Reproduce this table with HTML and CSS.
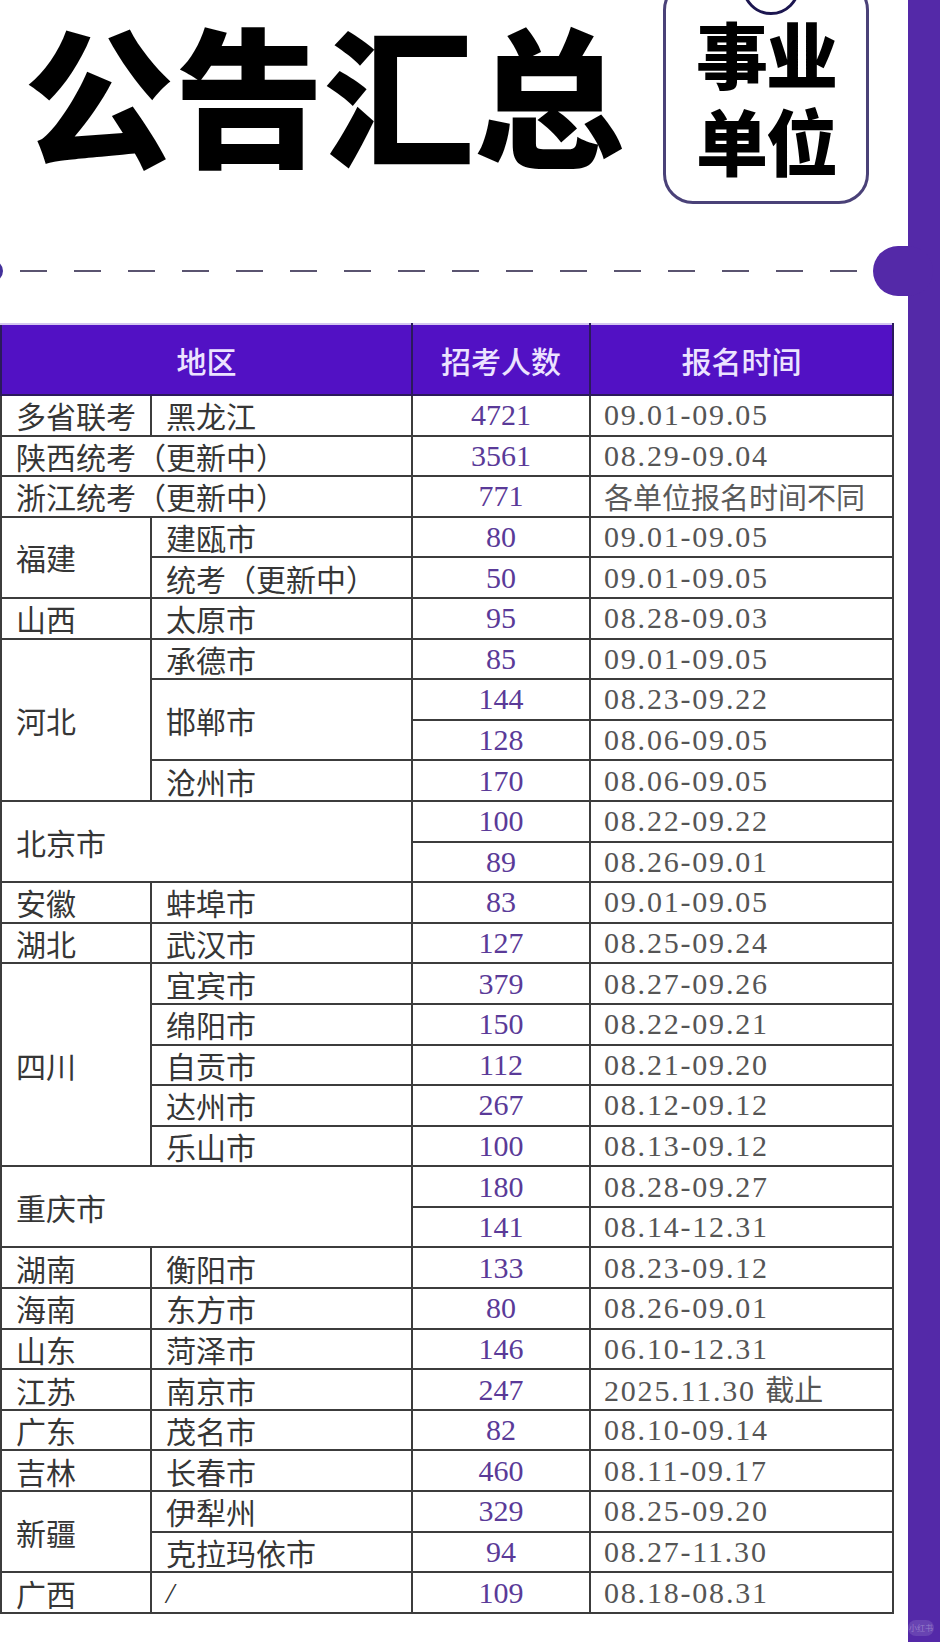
FILE: index.html
```html
<!DOCTYPE html>
<html lang="zh-CN">
<head>
<meta charset="utf-8">
<title>公告汇总 事业单位</title>
<link rel="stylesheet" href="styles.css">
</head>
<body>
<div class="page">
  <main class="main">
    <header class="hero">
      <h1 class="title">公告汇总</h1>
      <div class="tag">
        <span class="tag-hole"></span>
        <div class="tag-line">事业</div>
        <div class="tag-line">单位</div>
      </div>
    </header>
    <div class="divider"></div>
    <table class="sheet">
      <colgroup>
        <col class="c1"><col class="c2"><col class="c3"><col class="c4">
      </colgroup>
      <thead>
        <tr class="head"><th colspan="2">地区</th><th>招考人数</th><th>报名时间</th></tr>
      </thead>
      <tbody>
        <tr><td class="r">多省联考</td><td class="r">黑龙江</td><td class="n">4721</td><td class="d">09.01-09.05</td></tr>
        <tr><td class="r" colspan="2">陕西统考（更新中）</td><td class="n">3561</td><td class="d">08.29-09.04</td></tr>
        <tr><td class="r" colspan="2">浙江统考（更新中）</td><td class="n">771</td><td class="d cjk">各单位报名时间不同</td></tr>
        <tr><td class="r" rowspan="2">福建</td><td class="r">建瓯市</td><td class="n">80</td><td class="d">09.01-09.05</td></tr>
        <tr><td class="r">统考（更新中）</td><td class="n">50</td><td class="d">09.01-09.05</td></tr>
        <tr><td class="r">山西</td><td class="r">太原市</td><td class="n">95</td><td class="d">08.28-09.03</td></tr>
        <tr><td class="r" rowspan="4">河北</td><td class="r">承德市</td><td class="n">85</td><td class="d">09.01-09.05</td></tr>
        <tr><td class="r" rowspan="2">邯郸市</td><td class="n">144</td><td class="d">08.23-09.22</td></tr>
        <tr><td class="n">128</td><td class="d">08.06-09.05</td></tr>
        <tr><td class="r">沧州市</td><td class="n">170</td><td class="d">08.06-09.05</td></tr>
        <tr><td class="r" colspan="2" rowspan="2">北京市</td><td class="n">100</td><td class="d">08.22-09.22</td></tr>
        <tr><td class="n">89</td><td class="d">08.26-09.01</td></tr>
        <tr><td class="r">安徽</td><td class="r">蚌埠市</td><td class="n">83</td><td class="d">09.01-09.05</td></tr>
        <tr><td class="r">湖北</td><td class="r">武汉市</td><td class="n">127</td><td class="d">08.25-09.24</td></tr>
        <tr><td class="r" rowspan="5">四川</td><td class="r">宜宾市</td><td class="n">379</td><td class="d">08.27-09.26</td></tr>
        <tr><td class="r">绵阳市</td><td class="n">150</td><td class="d">08.22-09.21</td></tr>
        <tr><td class="r">自贡市</td><td class="n">112</td><td class="d">08.21-09.20</td></tr>
        <tr><td class="r">达州市</td><td class="n">267</td><td class="d">08.12-09.12</td></tr>
        <tr><td class="r">乐山市</td><td class="n">100</td><td class="d">08.13-09.12</td></tr>
        <tr><td class="r" colspan="2" rowspan="2">重庆市</td><td class="n">180</td><td class="d">08.28-09.27</td></tr>
        <tr><td class="n">141</td><td class="d">08.14-12.31</td></tr>
        <tr><td class="r">湖南</td><td class="r">衡阳市</td><td class="n">133</td><td class="d">08.23-09.12</td></tr>
        <tr><td class="r">海南</td><td class="r">东方市</td><td class="n">80</td><td class="d">08.26-09.01</td></tr>
        <tr><td class="r">山东</td><td class="r">菏泽市</td><td class="n">146</td><td class="d">06.10-12.31</td></tr>
        <tr><td class="r">江苏</td><td class="r">南京市</td><td class="n">247</td><td class="d">2025.11.30 <span class="zh">截止</span></td></tr>
        <tr><td class="r">广东</td><td class="r">茂名市</td><td class="n">82</td><td class="d">08.10-09.14</td></tr>
        <tr><td class="r">吉林</td><td class="r">长春市</td><td class="n">460</td><td class="d">08.11-09.17</td></tr>
        <tr><td class="r" rowspan="2">新疆</td><td class="r">伊犁州</td><td class="n">329</td><td class="d">08.25-09.20</td></tr>
        <tr><td class="r">克拉玛依市</td><td class="n">94</td><td class="d">08.27-11.30</td></tr>
        <tr><td class="r">广西</td><td class="r slash">/</td><td class="n">109</td><td class="d">08.18-08.31</td></tr>
      </tbody>
    </table>
  </main>
  <aside class="bar"></aside>
  <div class="watermark">小红书</div>
</div>
</body>
</html>
```

FILE: styles.css
```css
html, body {
  margin: 0;
  padding: 0;
  background: #ffffff;
}

.page {
  position: relative;
  display: flex;
  width: 940px;
  height: 1642px;
  overflow: hidden;
  background: #ffffff;
  font-family: "Noto Sans CJK SC", "Noto Sans", sans-serif;
}

.main {
  width: 908px;
  flex: 0 0 908px;
}

.bar {
  flex: 0 0 32px;
  width: 32px;
  background: #5429a8;
}

/* ---------- hero ---------- */
.hero {
  display: flex;
  align-items: flex-start;
  height: 270px;
}

.title {
  margin: -18px 0 0 24px;
  padding: 0;
  font-family: "Noto Sans CJK SC", sans-serif;
  font-weight: 900;
  font-size: 150px;
  line-height: normal;
  color: #000000;
  white-space: nowrap;
}

.tag {
  position: relative;
  box-sizing: border-box;
  width: 206px;
  height: 224px;
  margin: -20px 39px 0 auto;
  padding-top: 16px;
  border: 3px solid #4a4178;
  border-radius: 30px;
  background: #ffffff;
  text-align: center;
}

.tag-hole {
  position: absolute;
  z-index: 1;
  left: 76px;
  top: -26px;
  width: 52px;
  height: 52px;
  border: 3px solid #1c1650;
  border-radius: 50%;
  background: #ffffff;
}

.tag-line {
  font-family: "Noto Sans CJK SC", sans-serif;
  font-weight: 900;
  font-size: 72px;
  line-height: normal;
  height: 87px;
  color: #000000;
  letter-spacing: -2px;
  white-space: nowrap;
}

/* ---------- divider ---------- */
.divider {
  position: relative;
  width: 838px;
  height: 2px;
  margin-left: 20px;
  background: repeating-linear-gradient(90deg, #5a5470 0 27px, transparent 27px 54px);
}

.divider::before {
  content: "";
  position: absolute;
  left: -39px;
  top: -10px;
  width: 22px;
  height: 22px;
  border-radius: 50%;
  background: #43309a;
}

.divider::after {
  content: "";
  position: absolute;
  left: 853px;
  top: -24px;
  width: 60px;
  height: 50px;
  border-radius: 25px;
  background: #5429a8;
}

/* ---------- table ---------- */
.sheet {
  width: 892px;
  margin-top: 51px;
  border-collapse: collapse;
  table-layout: fixed;
  background: #ffffff;
}

.c1 { width: 150px; }
.c2 { width: 261px; }
.c3 { width: 178px; }
.c4 { width: 303px; }

.head {
  height: 71px;
}

.head th {
  background: #5211c4;
  color: #ece3ff;
  font-family: "Noto Sans CJK SC", sans-serif;
  font-weight: 500;
  font-size: 30px;
  line-height: 36px;
  text-align: center;
  vertical-align: middle;
  border: 2px solid #2b1a5c;
  border-top: 2px solid #d4c6f0;
  padding: 0;
}

.sheet tbody tr {
  height: 40.6px;
}

.sheet td {
  border: 2px solid #3c3c3c;
  padding: 0 0 0 14px;
  vertical-align: middle;
  white-space: nowrap;
  line-height: 34px;
}

.r {
  font-family: "Noto Sans CJK SC", sans-serif;
  font-size: 30px;
  font-weight: 400;
  color: #363636;
}

.slash {
  font-family: "Liberation Serif", serif;
  font-style: italic;
  padding-left: 16px;
}

.n {
  text-align: center;
  padding-left: 0 !important;
  font-family: "Liberation Serif", "Noto Sans CJK SC", serif;
  font-size: 30px;
  color: #5a3a98;
}

.d {
  padding-left: 13px !important;
  font-family: "Liberation Serif", "Noto Sans CJK SC", serif;
  font-size: 30px;
  letter-spacing: 1.8px;
  color: #555555;
}

.d.cjk {
  font-family: "Noto Sans CJK SC", sans-serif;
  letter-spacing: 0;
  font-size: 29px;
  color: #5a5a5a;
}

.zh {
  font-family: "Noto Sans CJK SC", sans-serif;
  letter-spacing: 0;
  font-size: 29px;
}

/* ---------- watermark ---------- */
.watermark {
  position: absolute;
  left: 908px;
  top: 1620px;
  width: 26px;
  height: 16px;
  border-radius: 8px;
  background: rgba(255, 255, 255, 0.12);
  color: rgba(255, 255, 255, 0.3);
  font-size: 8px;
  line-height: 16px;
  text-align: center;
  overflow: hidden;
  white-space: nowrap;
}
```
